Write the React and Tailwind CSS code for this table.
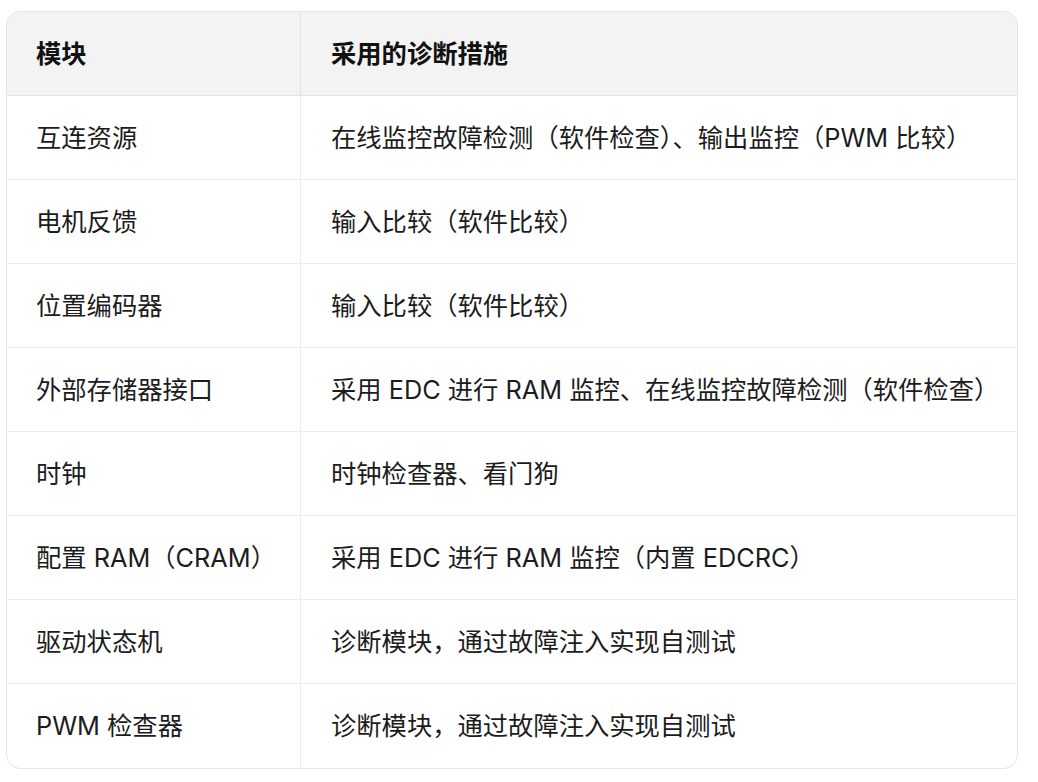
import React from 'react';

const rows = [
  { module: '互连资源', measure: '在线监控故障检测（软件检查）、输出监控（PWM 比较）' },
  { module: '电机反馈', measure: '输入比较（软件比较）' },
  { module: '位置编码器', measure: '输入比较（软件比较）' },
  { module: '外部存储器接口', measure: '采用 EDC 进行 RAM 监控、在线监控故障检测（软件检查）' },
  { module: '时钟', measure: '时钟检查器、看门狗' },
  { module: '配置 RAM（CRAM）', measure: '采用 EDC 进行 RAM 监控（内置 EDCRC）' },
  { module: '驱动状态机', measure: '诊断模块，通过故障注入实现自测试' },
  { module: 'PWM 检查器', measure: '诊断模块，通过故障注入实现自测试' },
];

const App = () => {
  return (
    <div
      className="bg-white pl-[6px] pr-[20px] pt-[11px] pb-[13px] text-[#1c1c1c]"
      style={{ fontFamily: 'Inter, "Noto Sans CJK SC", sans-serif' }}
    >
      <div className="w-[1012px] rounded-[14px] border border-[#e5e5e5] overflow-hidden">
        <div className="grid grid-cols-[294px_1fr] bg-[#f3f3f3] border-b border-[#e3e3e3] h-[84px]">
          <div className="flex items-center pl-[29px] border-r border-[#e3e3e3] text-[25.3px] font-bold text-[#111]">
            模块
          </div>
          <div className="flex items-center pl-[30px] text-[25.3px] font-bold text-[#111]">采用的诊断措施</div>
        </div>
        {rows.map((row, i) => (
          <div
            key={row.module}
            className={`grid grid-cols-[294px_1fr] h-[84px] ${i < rows.length - 1 ? 'border-b border-[#ececec]' : ''}`}
          >
            <div className="flex items-center pl-[29px] border-r border-[#ececec] text-[25.3px]">
              {row.module}
            </div>
            <div className="flex items-center pl-[30px] text-[25.3px] whitespace-nowrap">{row.measure}</div>
          </div>
        ))}
      </div>
    </div>
  );
};

export default App;
